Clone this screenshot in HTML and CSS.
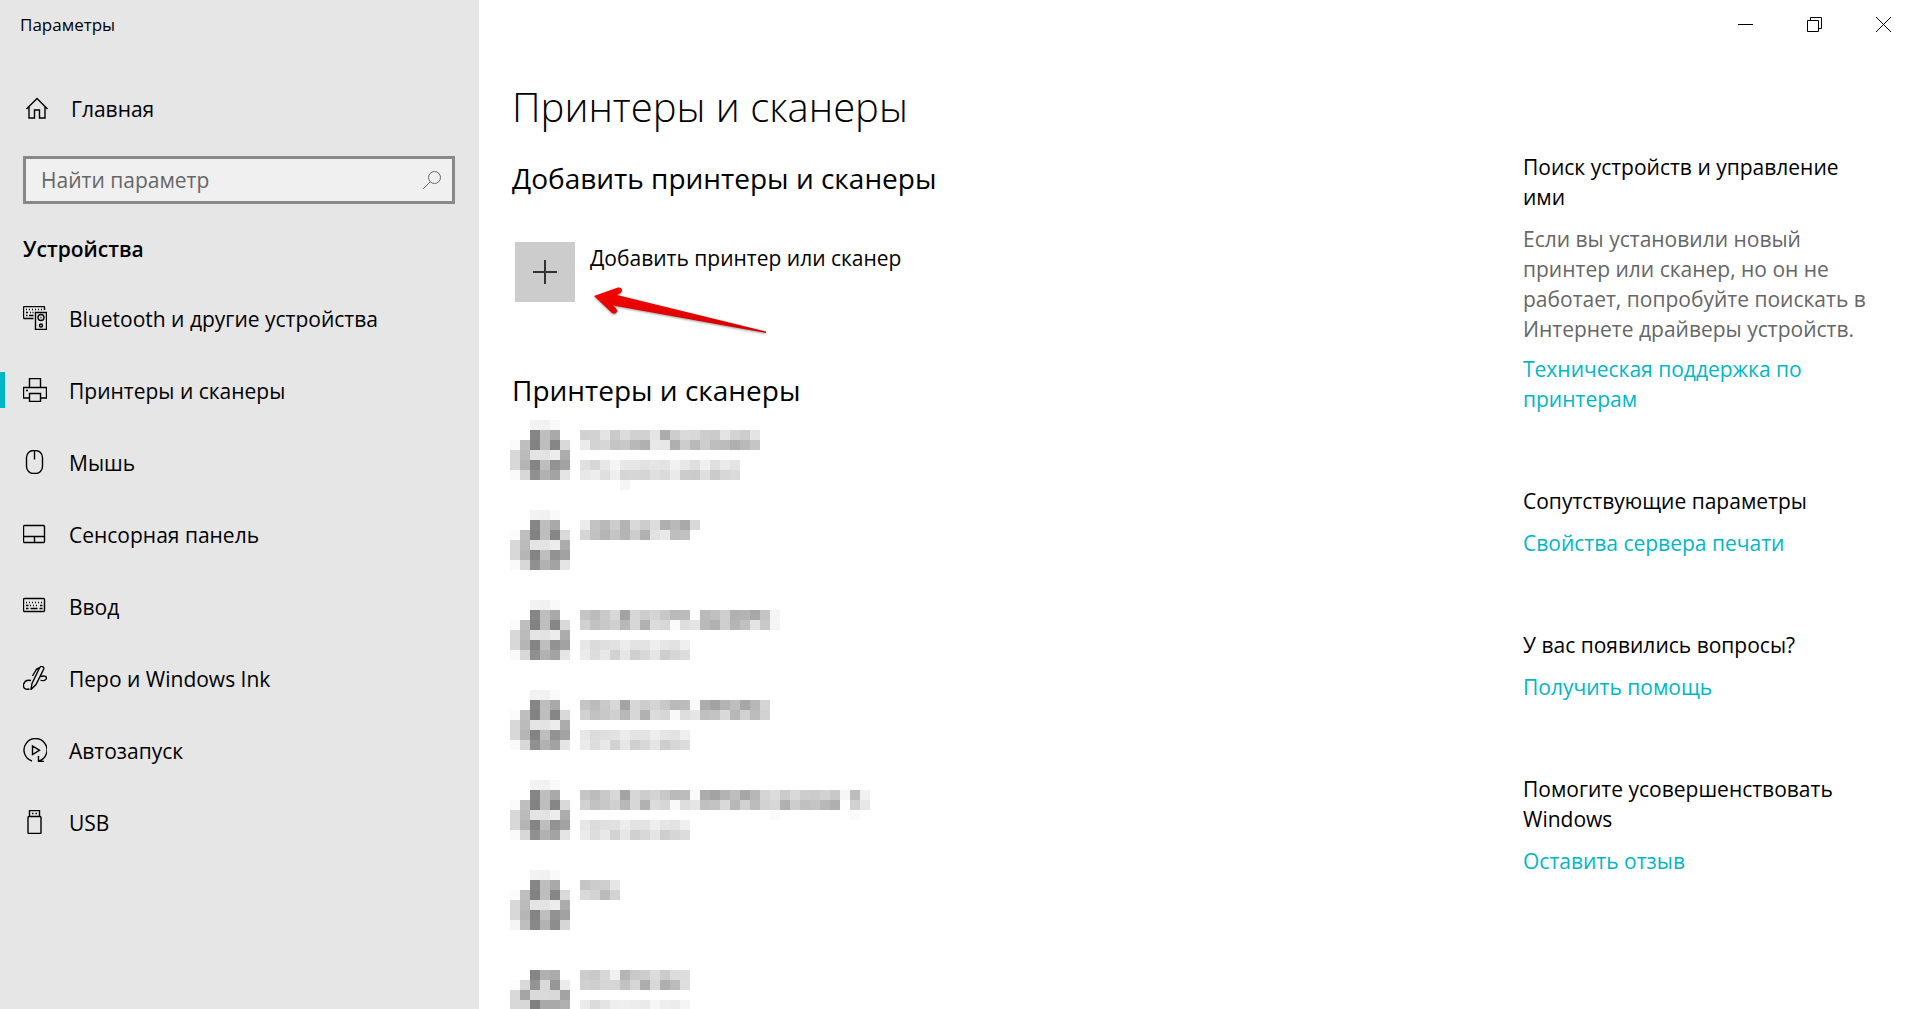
FILE: index.html
```html
<!DOCTYPE html>
<html lang="ru">
<head>
<meta charset="utf-8">
<meta name="viewport" content="width=device-width, initial-scale=1">
<title>Параметры</title>
<link rel="stylesheet" href="styles.css">
</head>
<body>
<div class="window">
  <nav class="sidebar" aria-label="Разделы">
    <div class="window-title">Параметры</div>
    <a class="nav-link home" href="#home">
      <svg class="icon" viewBox="0 0 24 24"><path d="M1.5 13 12 2.500 22.500 13M4 11v11h5.500v-8h5v8H20V11"/></svg>
      <span>Главная</span>
    </a>
    <div class="search">
      <input type="search" aria-label="Найти параметр" placeholder="Найти параметр">
      <svg class="search-icon" viewBox="0 0 20 20"><circle cx="12.500" cy="7.500" r="6"/><path d="M8 12 1 19"/></svg>
    </div>
    <h2 class="group-title">Устройства</h2>
    <ul class="nav-list">
      <li><a class="nav-link" href="#bluetooth">
        <svg class="icon" viewBox="0 0 24 24"><path d="M10.500 12.500H1.500a1 1 0 0 1-1-1v-10a1 1 0 0 1 1-1h19a1 1 0 0 1 1 1V4M12.500 6.500h11v17h-11z"/><path class="keys" d="M3 3.500h17"/><path d="M3 6.500h2M7 6.500h1M9.500 6.500h1M3 9.500h1.500M6 9.500h4.500"/><circle cx="18" cy="11.500" r="3"/><circle cx="18" cy="19.500" r="1.500"/><path d="M17.500 11.500h1"/></svg>
        <span>Bluetooth и другие устройства</span></a></li>
      <li><a class="nav-link current" href="#printers" aria-current="page">
        <svg class="icon" viewBox="0 0 24 24"><path d="M6.500 9.500v-9h11v9M6.500 20H.500V9.500h23V20h-6M6.500 15.500h11v8h-11zM3 12.500h2"/></svg>
        <span>Принтеры и сканеры</span></a></li>
      <li><a class="nav-link" href="#mouse">
        <svg class="icon" viewBox="0 0 24 24"><rect x="3.500" y=".5" width="16" height="23" rx="7"/><path d="M11.500 1v8.500"/></svg>
        <span>Мышь</span></a></li>
      <li><a class="nav-link" href="#touchpad">
        <svg class="icon" viewBox="0 0 24 24"><rect x=".5" y="3.500" width="21" height="17" rx="1"/><path d="M.500 14.500h21M11.500 14.500v6"/></svg>
        <span>Сенсорная панель</span></a></li>
      <li><a class="nav-link" href="#typing">
        <svg class="icon" viewBox="0 0 24 24"><rect x=".5" y="4.500" width="21" height="13" rx="1"/><path class="keys" d="M3 8.500h17M7 11.500h9"/><path d="M3 11.500h2.500M17 11.500h2.500M3 14.500h2.500M7.500 14.500h7M16.500 14.500h3"/></svg>
        <span>Ввод</span></a></li>
      <li><a class="nav-link" href="#pen">
        <svg class="icon" viewBox="0 0 24 24"><path d="M8 23.500 9 17.500 16.500 2q1-2 3-1.500 2 1 1 3L13 18.500zM9.500 10 13 4q1-1.500 3-2M6.500 23C2 24 0 22 .500 18.500 1.500 15 4 13.500 8 14.500M17.500 10.500c3-1 6-.500 6 1.500S20 15.500 17.500 14"/></svg>
        <span>Перо и Windows Ink</span></a></li>
      <li><a class="nav-link" href="#autoplay">
        <svg class="icon" viewBox="0 0 24 24"><path d="M9 23A11.500 11.500 0 1 1 16 23M15.500 18v5.500H21M9.500 8v8.500l7-4.200z"/></svg>
        <span>Автозапуск</span></a></li>
      <li><a class="nav-link" href="#usb">
        <svg class="icon" viewBox="0 0 24 24"><path d="M6.500 6V.500h10V6M9 3.500h1.500M12.500 3.500H14"/><rect x="5" y="6.500" width="13" height="17" rx="1"/></svg>
        <span>USB</span></a></li>
    </ul>
  </nav>

  <div class="page">
    <div class="caption-bar">
      <button type="button" aria-label="Свернуть"><svg viewBox="0 0 15 15"><path d="M0 7.500h15"/></svg></button>
      <button type="button" aria-label="Восстановить"><svg viewBox="0 0 15 15"><path d="M.500 3.500h11v11H.500zM3.500 3.500v-3h11v11h-3"/></svg></button>
      <button type="button" aria-label="Закрыть"><svg viewBox="0 0 15 15"><path d="m0 0 15 15M15 0 0 15"/></svg></button>
    </div>
    <div class="columns">
      <main class="content">
        <h1>Принтеры и сканеры</h1>
        <h2>Добавить принтеры и сканеры</h2>
        <div class="add-row">
          <button class="add-button" type="button">
            <span class="add-tile"><svg viewBox="0 0 24 24"><path d="M12 0v24M0 12h24"/></svg></span>
            <span class="add-label">Добавить принтер или сканер</span>
          </button>
          <svg class="arrow" viewBox="0 0 180 52">
            <defs><linearGradient id="red" x1="0" y1="0" x2="0" y2="1"><stop offset="0" stop-color="#f60400"/><stop offset="1" stop-color="#d40000"/></linearGradient></defs>
            <path d="M2 12 26 3.500Q30 3 30 6.500 30 8.500 25 11L174 47.500v1.500L21 21.500Q26 25 25 28 23 31 20 29Z"/>
          </svg>
        </div>
        <h2>Принтеры и сканеры</h2>
        <ul class="devices" id="devices"></ul>
      </main>
      <aside class="help">
        <section>
          <h3>Поиск устройств и управление ими</h3>
          <p>Если вы установили новый принтер или сканер, но он не работает, попробуйте поискать в Интернете драйверы устройств.</p>
          <a href="#support">Техническая поддержка по принтерам</a>
        </section>
        <section>
          <h3>Сопутствующие параметры</h3>
          <a href="#server">Свойства сервера печати</a>
        </section>
        <section>
          <h3>У вас появились вопросы?</h3>
          <a href="#help">Получить помощь</a>
        </section>
        <section>
          <h3>Помогите усовершенствовать Windows</h3>
          <a href="#feedback">Оставить отзыв</a>
        </section>
      </aside>
    </div>
  </div>
</div>
<script src="devices.js"></script>
</body>
</html>
```
FILE: styles.css
```css
* { box-sizing: border-box; }

body {
  margin: 0;
  background: #fff;
  color: #000;
  font: 21px/30px "Open Sans", "Noto Sans", sans-serif;
}

h1, h2, h3, p, ul { margin: 0; padding: 0; font-weight: 400; }
ul { list-style: none; }
button { border: 0; background: none; padding: 0; font: inherit; color: inherit; }
svg { display: block; fill: none; stroke: #000; }

.window { display: flex; height: 100vh; overflow: hidden; }

/* Sidebar */
.sidebar { flex: 0 0 479px; background: #e6e6e6; }
.window-title { padding: 10px 20px 0; height: 72px; font-size: 17px; }
.nav-link {
  display: flex;
  align-items: center;
  gap: 22px;
  height: 72px;
  padding-left: 23px;
  color: #000;
  text-decoration: none;
}
.nav-link span { padding-top: 2px; }
.icon { flex: none; width: 24px; height: 24px; stroke-width: 1.4; }
.keys { stroke-dasharray: 1 2; }
.current { position: relative; }
.current::before {
  content: "";
  position: absolute;
  left: 0;
  width: 5px;
  height: 36px;
  background: #00b7c3;
}
.home { padding-left: 25px; }
.search {
  display: flex;
  align-items: center;
  height: 48px;
  margin: 12px 24px 0 23px;
  padding: 0 10px 0 15px;
  border: 3px solid #888;
  background: #f0f0f0;
}
.search input {
  flex: 1;
  min-width: 0;
  padding: 0;
  border: 0;
  outline: 0;
  background: none;
  font: inherit;
}
.search input::placeholder { color: #666; opacity: 1; }
.search-icon { width: 20px; height: 20px; stroke: #666; }
.group-title { margin: 30px 23px 18px; font-size: 21px; font-weight: 600; }

/* Page */
.page { flex: 1; min-width: 0; }
.caption-bar { display: flex; justify-content: flex-end; height: 48px; }
.caption-bar button { width: 69px; padding-left: 27px; }
.caption-bar button:last-child { width: 60px; }
.caption-bar svg { width: 15px; height: 15px; }
.columns { display: flex; justify-content: space-between; }

.content { flex: 1; padding: 29px 0 0 33px; }
h1 { font-size: 40px; line-height: 60px; font-weight: 300; }
.content h2 { font-size: 28px; line-height: 40px; }
h1 + h2 { margin-top: 21px; }
.add-row { position: relative; margin: 44px 0 68px 3px; }
.add-button { display: flex; gap: 15px; text-align: left; }
.add-tile { display: grid; place-items: center; width: 60px; height: 60px; background: #ccc; }
.add-tile svg { width: 24px; height: 24px; stroke: #333; stroke-width: 2; }
.add-label { padding-top: 1px; }
.arrow { position: absolute; left: 77px; top: 42px; width: 180px; height: 52px; }
.arrow path { fill: url(#red); stroke: none; filter: drop-shadow(0 1px 1px #0006); }

.devices { margin-left: -2px; padding-top: 10px; }
.device { display: flex; gap: 10px; height: 90px; }
.device svg { flex: none; stroke: none; }
.device-text { margin-top: 10px; }

.help { width: 386px; padding: 104px 30px 0 0; }
.help section { margin-bottom: 72px; }
.help h3 { margin-bottom: 12px; font-size: 21px; }
.help p { margin-bottom: 10px; color: #666; }
.help a { display: block; color: #00b7c3; text-decoration: none; }
```
FILE: devices.js
```javascript
// Each device is a pixelated icon and label: rows of two-digit grey levels, ".." for an empty cell.
const CELL = 10;

const iconTop = [
  "....f2f1f9..",
  "....86bea9..",
  "fbbe82be86d9",
  "d8bbe4e3ecac",
  "d8b584be92a2"
];
const icon = [...iconTop, "fad890b1a3e5"];
const iconDark = [...iconTop, "f5be88b28dd6"];
const iconLast = [
  "............",
  "....85b0ab..",
  "fdd994d997eb",
  "d9a5dadad9a3",
  "d8d880a9a9b0"
];
const port = ["e7dbdfe1ece3e3eee5e2ef", "ebdde8d2e6d0d8e5ced6dc"];

const devices = [
  { icon, text: [
    "d1d2e4cbdcd1d1e4accddad8cdcbe4d4cde4",
    "ebd3d6c4c8b8b0e8e7afcdb9cdbebcafb9c5",
    "",
    "e0d7e7f5e7e6e2e5e3f1e8dff0dfeae3",
    "e8eddfeed5d6d5dfdaeacccbdfcbd7da",
    "........f5"
  ] },
  { icon, text: ["ebc3b9cdb3d9cddcafb9a9d8", "d5c2b5c5b5cdb1e2e9bec1fe"] },
  { icon, text: [
    "c5bcc9d8a3d7cdd4c8babcfebac0cfb1b4a7c4f5",
    "d1c2c8d0b8d7b1dcd7f9dee4bab1cfb5c0e4c8f5",
    "", ...port
  ] },
  { icon, text: [
    "c5bcc9d8a3d7cdd4c8babcfaaca3b3bea7b7d5",
    "d1c2c8d0b8d7b1dcd7f9dee6c0c3d9b7d1bcd2",
    "", ...port
  ] },
  { icon, text: [
    "c5bcc9d8a3d7cdd4c8babcfaaca3b3bea7b7d5dccbd9cdcbd2c8f6bdf1",
    "d1c2c8d0b8d7b1dcd7f9dee6c0c3d9b7d1bcd2d7b0cdc0c4b8affed1e7",
    "......................................fb..............fb", ...port
  ] },
  { icon: iconDark, text: ["c5cccfe6", "d9d4bcd3"] },
  { icon: iconLast, text: [
    "cdc9d8f1b5c9cddccbdcdd",
    "d1cfd6d5c2d6add8afbbde",
    "",
    "ebdbe4eeefedeaf6eeecf5"
  ] }
];

function mosaic(rows, className) {
  const width = Math.max(...rows.map(row => row.length / 2)) * CELL;
  const height = rows.length * CELL;
  const cells = rows.flatMap((row, y) =>
    (row.match(/../g) || []).map((grey, x) => grey === ".." ? "" :
      `<rect x="${x * CELL}" y="${y * CELL}" width="${CELL}" height="${CELL}" fill="#${grey.repeat(3)}"/>`));
  return `<svg class="${className}" width="${width}" height="${height}" shape-rendering="crispEdges">${cells.join("")}</svg>`;
}

document.getElementById("devices").innerHTML = devices
  .map(device => `<li class="device">${mosaic(device.icon, "device-icon")}${mosaic(device.text, "device-text")}</li>`)
  .join("");
```
